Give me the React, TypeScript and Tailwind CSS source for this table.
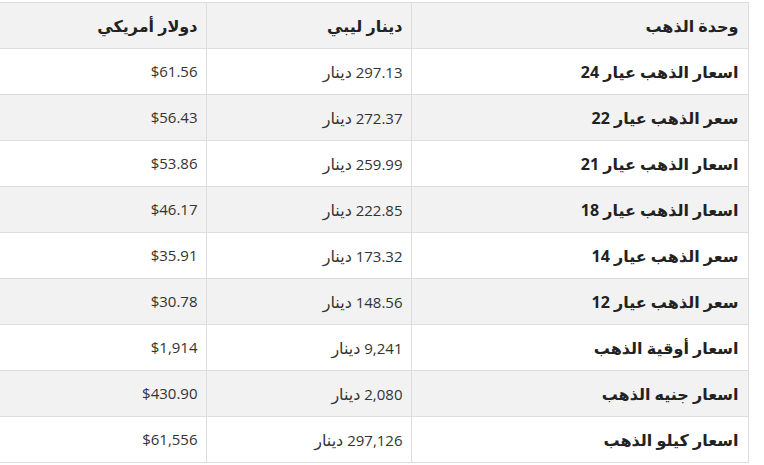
import React from 'react';

interface PriceRow {
  unit: string;
  lyd: string;
  usd: string;
}

const rows: PriceRow[] = [
  { unit: 'اسعار الذهب عيار 24', lyd: '297.13', usd: '$61.56' },
  { unit: 'سعر الذهب عيار 22', lyd: '272.37', usd: '$56.43' },
  { unit: 'اسعار الذهب عيار 21', lyd: '259.99', usd: '$53.86' },
  { unit: 'اسعار الذهب عيار 18', lyd: '222.85', usd: '$46.17' },
  { unit: 'سعر الذهب عيار 14', lyd: '173.32', usd: '$35.91' },
  { unit: 'سعر الذهب عيار 12', lyd: '148.56', usd: '$30.78' },
  { unit: 'اسعار أوقية الذهب', lyd: '9,241', usd: '$1,914' },
  { unit: 'اسعار جنيه الذهب', lyd: '2,080', usd: '$430.90' },
  { unit: 'اسعار كيلو الذهب', lyd: '297,126', usd: '$61,556' },
];

const App: React.FC = () => {
  return (
    <div
      className="w-[764px] h-[465px] bg-white pt-[2px] pr-[16px] overflow-hidden"
      style={{ fontFamily: '"Open Sans", "Noto Sans", "DejaVu Sans", sans-serif' }}
    >
      <table dir="rtl" className="w-[748px] border-collapse table-fixed text-[15px] text-[#222]">
        <colgroup>
          <col className="w-[337px]" />
          <col className="w-[205px]" />
          <col className="w-[206px]" />
        </colgroup>
        <thead>
          <tr className="bg-[#f2f2f2] h-[46px] text-[16px]">
            <th className="border border-[#dddddd] px-[9px] text-right font-bold">وحدة الذهب</th>
            <th className="border border-[#dddddd] px-[8px] text-right font-bold">دينار ليبي</th>
            <th className="border border-y-[#dddddd] border-r-[#dddddd] border-l-0 px-[8px] text-right font-bold">دولار أمريكي</th>
          </tr>
        </thead>
        <tbody>
          {rows.map((row, i) => (
            <tr key={row.unit} className={`h-[46px] ${i % 2 === 1 ? 'bg-[#f2f2f2]' : 'bg-white'}`}>
              <td className="border border-[#dddddd] px-[9px] text-right font-bold text-[16px]">{row.unit}</td>
              <td className="border border-[#dddddd] px-[8px] text-right text-[#333]">
                {row.lyd} <span className="text-[16px]">دينار</span>
              </td>
              <td className="border border-y-[#dddddd] border-r-[#dddddd] border-l-0 px-[8px] text-right text-[#333]" dir="ltr" style={{ textAlign: 'right' }}>
                {row.usd}
              </td>
            </tr>
          ))}
        </tbody>
      </table>
    </div>
  );
};

export default App;
